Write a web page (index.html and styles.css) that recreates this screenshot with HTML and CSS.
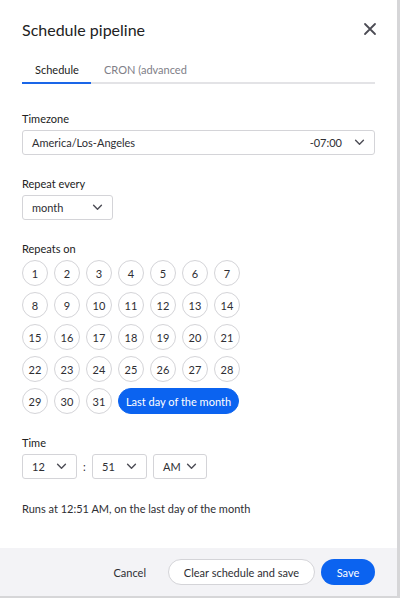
FILE: index.html
```html
<!DOCTYPE html>
<html lang="en">
<head>
    <meta charset="UTF-8">
    <meta name="viewport" content="width=device-width, initial-scale=1.0">
    <title>Schedule pipeline</title>
    <link rel="stylesheet" href="styles.css">
</head>
<body>
    <div class="modal">
        <div class="modal-body">
            <div class="header">
                <h1>Schedule pipeline</h1>
                <svg class="close" width="14" height="14" viewBox="0 0 14 14">
                    <path d="M2 2 L12 12 M12 2 L2 12" stroke="#4c4c55" stroke-width="1.8" stroke-linecap="round"/>
                </svg>
            </div>

            <div class="tabs">
                <div class="tab active">Schedule</div>
                <div class="tab">CRON (advanced</div>
            </div>

            <div class="field first">
                <div class="label">Timezone</div>
                <div class="select wide">
                    <span>America/Los-Angeles</span>
                    <span class="right"><span>-07:00</span><svg class="chev" viewBox="0 0 12 8"><path d="M1.5 1.5 L6 6 L10.5 1.5" fill="none" stroke="#4c4c55" stroke-width="1.6" stroke-linecap="round" stroke-linejoin="round"/></svg></span>
                </div>
            </div>

            <div class="field">
                <div class="label">Repeat every</div>
                <div class="select repeat">
                    <span>month</span>
                    <svg class="chev" viewBox="0 0 12 8"><path d="M1.5 1.5 L6 6 L10.5 1.5" fill="none" stroke="#4c4c55" stroke-width="1.6" stroke-linecap="round" stroke-linejoin="round"/></svg>
                </div>
            </div>

            <div class="field">
                <div class="label">Repeats on</div>
                <div class="days" id="days"></div>
            </div>

            <div class="field">
                <div class="label">Time</div>
                <div class="time-row">
                    <div class="select small">
                        <span>12</span>
                        <svg class="chev" viewBox="0 0 12 8"><path d="M1.5 1.5 L6 6 L10.5 1.5" fill="none" stroke="#4c4c55" stroke-width="1.6" stroke-linecap="round" stroke-linejoin="round"/></svg>
                    </div>
                    <span class="colon">:</span>
                    <div class="select small">
                        <span>51</span>
                        <svg class="chev" viewBox="0 0 12 8"><path d="M1.5 1.5 L6 6 L10.5 1.5" fill="none" stroke="#4c4c55" stroke-width="1.6" stroke-linecap="round" stroke-linejoin="round"/></svg>
                    </div>
                    <div class="select small ampm">
                        <span>AM</span>
                        <svg class="chev" viewBox="0 0 12 8"><path d="M1.5 1.5 L6 6 L10.5 1.5" fill="none" stroke="#4c4c55" stroke-width="1.6" stroke-linecap="round" stroke-linejoin="round"/></svg>
                    </div>
                </div>
            </div>

            <p class="summary">Runs at 12:51 AM, on the last day of the month</p>
        </div>

        <div class="footer">
            <button class="btn-link">Cancel</button>
            <button class="btn-outline">Clear schedule and save</button>
            <button class="btn-primary">Save</button>
        </div>
    </div>

    <script>
        // monta os dias do mes
        const days = document.getElementById("days");
        for (let i = 1; i <= 31; i++) {
            const d = document.createElement("div");
            d.className = "day";
            d.textContent = i;
            days.appendChild(d);
        }
        const last = document.createElement("div");
        last.className = "day last";
        last.textContent = "Last day of the month";
        days.appendChild(last);
    </script>
</body>
</html>
```

FILE: styles.css
```css
body {
    margin: 0;
    background-color: #d6d6d8;
    font-family: Lato, "Noto Sans", sans-serif;
    color: #2e2e33;
}
.modal {
    width: 397px;
    height: 596px;
    background-color: #fff;
    display: flex;
    flex-direction: column;
}
.modal-body {
    flex: 1;
    padding: 0 22px;
}
.header {
    display: flex;
    justify-content: space-between;
    align-items: center;
    height: 58px;
}
h1 {
    margin: 0;
    font-size: 16px;
    font-weight: 400;
    color: #222;
}
.close {
    margin-right: -2px;
}
.tabs {
    display: flex;
    border-bottom: 2px solid #e3e3e6;
    height: 24px;
}
.tab {
    font-size: 11px;
    color: #808088;
    padding: 0 13px;
    margin-bottom: -2px;
    line-height: 24px;
}
.tab.active {
    color: #222;
    border-bottom: 2px solid #1a66e8;
    width: 43px;
}
.field {
    margin-top: 22px;
}
.field.first {
    margin-top: 28px;
}
.label {
    font-size: 11px;
    color: #222;
    margin-bottom: 5px;
}
.select {
    display: flex;
    justify-content: space-between;
    align-items: center;
    box-sizing: border-box;
    height: 25px;
    border: 1px solid #d4d4d8;
    border-radius: 3px;
    padding: 0 9px 0 9px;
    font-size: 11px;
    color: #2e2e33;
}
.select.wide {
    width: 353px;
}
.select .right {
    display: flex;
    align-items: center;
    gap: 12px;
}
.chev {
    width: 11px;
    height: 7px;
}
.select.repeat {
    width: 91px;
}
.days {
    display: grid;
    grid-template-columns: repeat(7, 26px);
    column-gap: 6px;
    row-gap: 6px;
}
.day {
    box-sizing: border-box;
    width: 26px;
    height: 26px;
    border: 1px solid #d4d4d8;
    border-radius: 13px;
    display: flex;
    align-items: center;
    justify-content: center;
    font-size: 11px;
    color: #2e2e33;
}
.day.last {
    grid-column: 4 / span 4;
    width: 121px;
    background-color: #0b63f0;
    border-color: #0b63f0;
    color: #fff;
}
.time-row {
    display: flex;
    align-items: center;
}
.select.small {
    width: 55px;
}
.colon {
    width: 15px;
    text-align: center;
    font-size: 11px;
}
.select.ampm {
    width: 54px;
    margin-left: 6px;
}
.summary {
    margin: 23px 0 0;
    font-size: 11px;
    color: #2e2e33;
}
.footer {
    height: 48px;
    background-color: #f3f3f6;
    display: flex;
    align-items: center;
    justify-content: flex-end;
    padding: 0 22px 0 0;
}
button {
    font-family: Lato, "Noto Sans", sans-serif;
    font-size: 11px;
    height: 26px;
    border-radius: 13px;
    cursor: pointer;
}
.btn-link {
    background: none;
    border: none;
    color: #2e2e33;
    padding: 0;
    margin-right: 22px;
}
.btn-outline {
    background-color: #fff;
    border: 1px solid #d4d4d8;
    color: #2e2e33;
    width: 147px;
    margin-right: 6px;
}
.btn-primary {
    background-color: #0b63f0;
    border: none;
    color: #fff;
    width: 54px;
}
```
